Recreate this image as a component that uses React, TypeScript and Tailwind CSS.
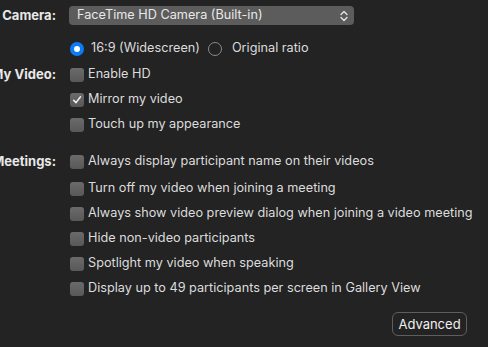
import React from "react";

const font = "font-['Inter','Liberation_Sans',sans-serif]";

function Checkbox({ checked }: { checked?: boolean }) {
  return (
    <div className="w-[14px] h-[14px] rounded-[3px] bg-gradient-to-b from-[#6b6b6b] to-[#585858] flex items-center justify-center shrink-0">
      {checked && (
        <svg width="10" height="10" viewBox="0 0 10 10">
          <path d="M1.6 5.2 L4 7.6 L8.5 1.8" fill="none" stroke="#f2f2f2" strokeWidth="1.5" strokeLinecap="round" strokeLinejoin="round" />
        </svg>
      )}
    </div>
  );
}

function Row({ label, children, className = "" }: { label?: string; children: React.ReactNode; className?: string }) {
  return (
    <div className={`flex items-center h-[25px] ${className}`}>
      <div className="w-[56px] shrink-0 flex justify-end whitespace-nowrap font-bold text-[13px] text-[#e8e8e8]">{label}</div>
      <div className="ml-[14px] flex items-center whitespace-nowrap">{children}</div>
    </div>
  );
}

function CheckRow({ label, text, checked, className = "" }: { label?: string; text: string; checked?: boolean; className?: string }) {
  return (
    <Row label={label} className={className}>
      <Checkbox checked={checked} />
      <span className="ml-[4px]">{text}</span>
    </Row>
  );
}

export default function App() {
  return (
    <div className={`w-[488px] h-[347px] bg-[#232323] overflow-hidden text-[12.7px] leading-none text-[#dcdcdc] ${font} flex flex-col`}>
      <Row label="Camera:" className="mt-[3px]">
        <div className="-ml-[1px] w-[285px] h-[19px] rounded-[4px] bg-[#5c5c5c] flex items-center justify-between pl-[8px] pr-[6px] text-[#e8e8e8]">
          <span>FaceTime HD Camera (Built-in)</span>
          <svg width="8" height="12" viewBox="0 0 8 12">
            <path d="M1 4.5 L4 1.5 L7 4.5 M1 7.5 L4 10.5 L7 7.5" fill="none" stroke="#e8e8e8" strokeWidth="1.3" strokeLinecap="round" strokeLinejoin="round" />
          </svg>
        </div>
      </Row>
      <Row className="mt-[8px]">
        <div className="w-[14px] h-[14px] rounded-full bg-[#0a7cf7] flex items-center justify-center">
          <div className="w-[6px] h-[6px] rounded-full bg-white" />
        </div>
        <span className="ml-[7px]">16:9 (Widescreen)</span>
        <div className="ml-[8px] w-[14px] h-[14px] rounded-full border border-[#8a8a8a]" />
        <span className="ml-[10px]">Original ratio</span>
      </Row>
      <CheckRow label="My Video:" text="Enable HD" className="mt-[1px]" />
      <CheckRow text="Mirror my video" checked />
      <CheckRow text="Touch up my appearance" />
      <CheckRow label="Meetings:" text="Always display participant name on their videos" className="mt-[12px]" />
      <CheckRow text="Turn off my video when joining a meeting" className="mt-[2px]" />
      <CheckRow text="Always show video preview dialog when joining a video meeting" />
      <CheckRow text="Hide non-video participants" />
      <CheckRow text="Spotlight my video when speaking" />
      <CheckRow text="Display up to 49 participants per screen in Gallery View" />
      <div className="flex justify-end mt-[11px] pr-[21px]">
        <button className="w-[75px] h-[24px] rounded-[6px] border border-[#5e5e5e] text-[13px] text-[#f0f0f0] flex items-center justify-center">
          Advanced
        </button>
      </div>
    </div>
  );
}
